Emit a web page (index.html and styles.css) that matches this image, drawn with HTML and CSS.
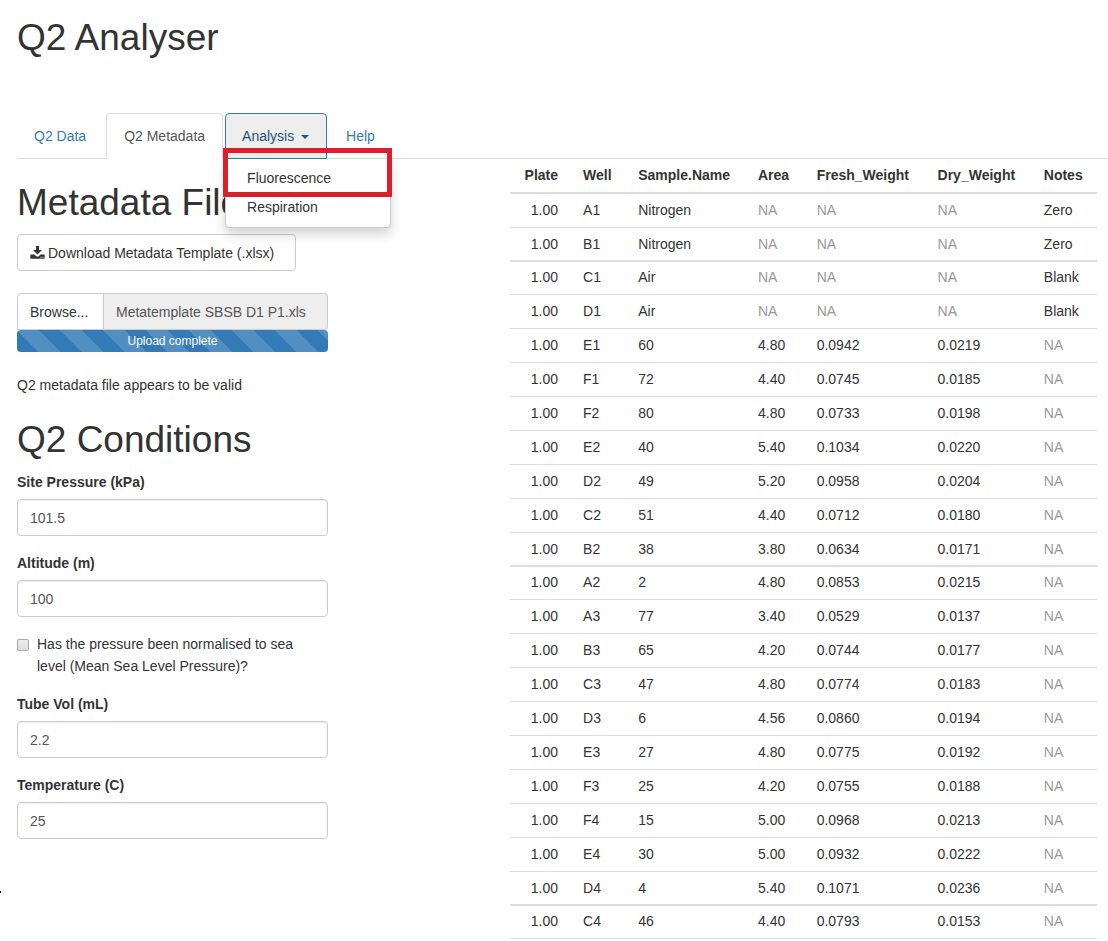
FILE: index.html
```html
<!DOCTYPE html>
<html lang="en">
<head>
<meta charset="utf-8">
<meta name="viewport" content="width=device-width, initial-scale=1">
<title>Q2 Analyser</title>
<link rel="stylesheet" href="styles.css">
</head>
<body>
<div class="page">
  <h1 class="heading">Q2 Analyser</h1>

  <nav class="tabs">
    <a class="tab" href="#data">Q2 Data</a>
    <a class="tab active" href="#metadata">Q2 Metadata</a>
    <div class="dropdown">
      <button class="tab open" type="button" aria-expanded="true">Analysis <span class="caret"></span></button>
      <div class="menu">
        <a class="menu-item" href="#fluorescence">Fluorescence</a>
        <a class="menu-item" href="#respiration">Respiration</a>
      </div>
      <div class="highlight"></div>
    </div>
    <a class="tab" href="#help">Help</a>
  </nav>

  <main class="content">
    <form class="sidebar">
      <h2 class="heading">Metadata File</h2>
      <button class="btn" type="button">
        <svg class="icon" viewBox="0 0 15 14" aria-hidden="true">
          <path fill="currentColor" d="M6 0h3v4h3L7.500 8.500 3 4h3z"/>
          <path fill="currentColor" fill-rule="evenodd" d="M1 8.500h3.500L6.500 10.500h2L10.500 8.500H14q.7 0 .7.700V12q0 .7-.7.700H1Q.3 12.700.3 12V9.200Q.3 8.500 1 8.500zM10.500 10.800v1h1v-1zm2 0v1h1v-1z"/>
        </svg>
        <span>Download Metadata Template (.xlsx)</span>
      </button>

      <div class="file-group">
        <button class="browse" type="button">Browse...</button>
        <input class="file-name" type="text" value="Metatemplate SBSB D1 P1.xls" aria-label="Selected file" readonly>
      </div>
      <div class="progress">Upload complete</div>
      <p class="status">Q2 metadata file appears to be valid</p>

      <h2 class="heading conditions">Q2 Conditions</h2>
      <div class="field">
        <label for="pressure">Site Pressure (kPa)</label>
        <input class="control" id="pressure" type="text" value="101.5">
      </div>
      <div class="field">
        <label for="altitude">Altitude (m)</label>
        <input class="control" id="altitude" type="text" value="100">
      </div>
      <div class="check">
        <input class="box" id="normalised" type="checkbox">
        <label for="normalised">Has the pressure been normalised to sea level (Mean Sea Level Pressure)?</label>
      </div>
      <div class="field">
        <label for="volume">Tube Vol (mL)</label>
        <input class="control" id="volume" type="text" value="2.2">
      </div>
      <div class="field">
        <label for="temperature">Temperature (C)</label>
        <input class="control" id="temperature" type="text" value="25">
      </div>
    </form>

    <table class="samples">
      <colgroup>
        <col class="c-plate"><col class="c-well"><col class="c-name"><col class="c-area"><col class="c-fresh"><col class="c-dry"><col class="c-notes">
      </colgroup>
      <thead>
        <tr><th>Plate</th><th>Well</th><th>Sample.Name</th><th>Area</th><th>Fresh_Weight</th><th>Dry_Weight</th><th>Notes</th></tr>
      </thead>
      <tbody>
        <tr class="first"><td>1.00</td><td>A1</td><td>Nitrogen</td><td class="na">NA</td><td class="na">NA</td><td class="na">NA</td><td>Zero</td></tr>
        <tr><td>1.00</td><td>B1</td><td>Nitrogen</td><td class="na">NA</td><td class="na">NA</td><td class="na">NA</td><td>Zero</td></tr>
        <tr class="strong"><td>1.00</td><td>C1</td><td>Air</td><td class="na">NA</td><td class="na">NA</td><td class="na">NA</td><td>Blank</td></tr>
        <tr><td>1.00</td><td>D1</td><td>Air</td><td class="na">NA</td><td class="na">NA</td><td class="na">NA</td><td>Blank</td></tr>
        <tr><td>1.00</td><td>E1</td><td>60</td><td>4.80</td><td>0.0942</td><td>0.0219</td><td class="na">NA</td></tr>
        <tr><td>1.00</td><td>F1</td><td>72</td><td>4.40</td><td>0.0745</td><td>0.0185</td><td class="na">NA</td></tr>
        <tr><td>1.00</td><td>F2</td><td>80</td><td>4.80</td><td>0.0733</td><td>0.0198</td><td class="na">NA</td></tr>
        <tr><td>1.00</td><td>E2</td><td>40</td><td>5.40</td><td>0.1034</td><td>0.0220</td><td class="na">NA</td></tr>
        <tr><td>1.00</td><td>D2</td><td>49</td><td>5.20</td><td>0.0958</td><td>0.0204</td><td class="na">NA</td></tr>
        <tr><td>1.00</td><td>C2</td><td>51</td><td>4.40</td><td>0.0712</td><td>0.0180</td><td class="na">NA</td></tr>
        <tr><td>1.00</td><td>B2</td><td>38</td><td>3.80</td><td>0.0634</td><td>0.0171</td><td class="na">NA</td></tr>
        <tr class="strong"><td>1.00</td><td>A2</td><td>2</td><td>4.80</td><td>0.0853</td><td>0.0215</td><td class="na">NA</td></tr>
        <tr><td>1.00</td><td>A3</td><td>77</td><td>3.40</td><td>0.0529</td><td>0.0137</td><td class="na">NA</td></tr>
        <tr><td>1.00</td><td>B3</td><td>65</td><td>4.20</td><td>0.0744</td><td>0.0177</td><td class="na">NA</td></tr>
        <tr><td>1.00</td><td>C3</td><td>47</td><td>4.80</td><td>0.0774</td><td>0.0183</td><td class="na">NA</td></tr>
        <tr><td>1.00</td><td>D3</td><td>6</td><td>4.56</td><td>0.0860</td><td>0.0194</td><td class="na">NA</td></tr>
        <tr><td>1.00</td><td>E3</td><td>27</td><td>4.80</td><td>0.0775</td><td>0.0192</td><td class="na">NA</td></tr>
        <tr><td>1.00</td><td>F3</td><td>25</td><td>4.20</td><td>0.0755</td><td>0.0188</td><td class="na">NA</td></tr>
        <tr><td>1.00</td><td>F4</td><td>15</td><td>5.00</td><td>0.0968</td><td>0.0213</td><td class="na">NA</td></tr>
        <tr><td>1.00</td><td>E4</td><td>30</td><td>5.00</td><td>0.0932</td><td>0.0222</td><td class="na">NA</td></tr>
        <tr><td>1.00</td><td>D4</td><td>4</td><td>5.40</td><td>0.1071</td><td>0.0236</td><td class="na">NA</td></tr>
        <tr class="strong last"><td>1.00</td><td>C4</td><td>46</td><td>4.40</td><td>0.0793</td><td>0.0153</td><td class="na">NA</td></tr>
      </tbody>
    </table>
  </main>
</div>
<div class="speck"></div>
</body>
</html>
```
FILE: styles.css
```css
* {
  box-sizing: border-box;
}

body {
  margin: 0;
  background: #fff;
  color: #333;
  font: 14px/22px "Liberation Sans", Arial, sans-serif;
}

button,
input {
  font: inherit;
  color: inherit;
}

.page {
  padding: 17px 0 0 17px;
}

.heading {
  margin: 0;
  font-size: 37px;
  line-height: 41px;
  font-weight: 400;
}

/* Tabs */
.tabs {
  display: flex;
  gap: 2px;
  margin-top: 55px;
  border-bottom: 1px solid #ddd;
}

.tab {
  display: block;
  height: 46px;
  margin-bottom: -1px;
  padding: 0 17px 0 16px;
  border: 1px solid transparent;
  border-radius: 4px 4px 0 0;
  background: none;
  color: #337ab7;
  line-height: 44px;
  text-decoration: none;
}

.tab.active {
  padding: 0 17px;
  border-color: #ddd #ddd #fff;
  background: #fff;
  color: #555;
}

.tab.open {
  border-color: #337ab7;
  background: #eee;
  color: #23527c;
}

.dropdown {
  position: relative;
}

.caret {
  display: inline-block;
  margin-left: 3px;
  vertical-align: middle;
  border-top: 4px solid;
  border-left: 4px solid transparent;
  border-right: 4px solid transparent;
}

.menu {
  position: absolute;
  z-index: 2;
  top: 100%;
  left: 0;
  width: 166px;
  margin-top: 1px;
  padding: 5px 0;
  border: 1px solid #ccc;
  border-top: 0;
  border-radius: 0 0 4px 4px;
  background: #fff;
  box-shadow: 0 6px 12px rgba(0, 0, 0, 0.18);
}

.menu-item {
  display: block;
  padding: 0 21px;
  color: #333;
  line-height: 29px;
  text-decoration: none;
}

.highlight {
  position: absolute;
  z-index: 3;
  top: 35px;
  left: -2px;
  width: 169px;
  height: 49px;
  border: 5px solid #dc202a;
  pointer-events: none;
}

/* Columns */
.content {
  display: grid;
  grid-template-columns: 311fr 587fr;
  column-gap: 182px;
  align-items: start;
  padding-right: 11px;
}

.sidebar {
  padding-top: 23px;
}

.btn {
  display: flex;
  align-items: center;
  gap: 3px;
  min-width: 279px;
  height: 37px;
  margin: 11px 0 22px;
  padding: 0 12px;
  border: 1px solid #ccc;
  border-radius: 4px;
  background: #fff;
  white-space: nowrap;
}

.icon {
  width: 15px;
  height: 14px;
}

.file-group {
  display: flex;
  height: 37px;
}

.browse {
  width: 87px;
  padding: 0 12px;
  border: 1px solid #ccc;
  border-radius: 4px 0 0 0;
  background: #fff;
  text-align: left;
}

.file-name {
  flex: 1;
  min-width: 0;
  padding: 0 12px;
  border: 1px solid #ccc;
  border-left: 0;
  border-radius: 0 4px 4px 0;
  background: #eee;
  color: #555;
}

.progress {
  height: 22px;
  border-radius: 4px;
  background: #337ab7 linear-gradient(45deg, rgba(255, 255, 255, 0.15) 25%, transparent 25%, transparent 50%, rgba(255, 255, 255, 0.15) 50%, rgba(255, 255, 255, 0.15) 75%, transparent 75%) 0 0 / 43px 43px;
  color: #fff;
  font-size: 12px;
  text-align: center;
}

.status {
  margin: 22px 0 23px;
}

.conditions {
  margin-bottom: 11px;
}

.field {
  margin-bottom: 16px;
}

.field label {
  display: block;
  margin-bottom: 6px;
  font-weight: 700;
}

.control {
  display: block;
  width: 100%;
  height: 37px;
  padding: 0 12px;
  border: 1px solid #ccc;
  border-radius: 4px;
  background: #fff;
  box-shadow: inset 0 1px 1px rgba(0, 0, 0, 0.075);
  color: #555;
}

.check {
  display: flex;
  gap: 8px;
  margin-bottom: 16px;
  padding-right: 16px;
}

.check label {
  flex: 1;
}

.box {
  appearance: none;
  flex: none;
  width: 12px;
  height: 12px;
  margin: 6px 0 0;
  border: 1px solid #aaa;
  border-radius: 2px;
  background: linear-gradient(#eee, #ddd);
}

/* Table */
.samples {
  width: 100%;
  table-layout: fixed;
  border-collapse: separate;
  border-spacing: 0;
}

.c-plate { width: 10.4%; }
.c-well { width: 9.4%; }
.c-name { width: 20.4%; }
.c-area { width: 10%; }
.c-fresh { width: 20.6%; }
.c-dry { width: 18.1%; }
.c-notes { width: 11.1%; }

.samples th,
.samples td {
  padding: 6px 0 6px 12px;
  line-height: 21px;
  text-align: left;
  white-space: nowrap;
}

.samples td {
  border-top: 1px solid #ddd;
}

.samples th:first-child,
.samples td:first-child {
  padding-right: 13px;
  text-align: right;
}

.samples .first td {
  border-top-width: 2px;
}

.samples .strong td {
  border-top-width: 2px;
  padding-top: 5px;
}

.samples tr:has(+ .strong) td {
  padding-bottom: 5px;
}

.samples .last td {
  border-bottom: 1px solid #ddd;
}

.samples .na {
  color: #999;
}

.speck {
  position: absolute;
  top: 891px;
  left: 0;
  width: 1px;
  height: 2px;
  background: #000;
}
```
